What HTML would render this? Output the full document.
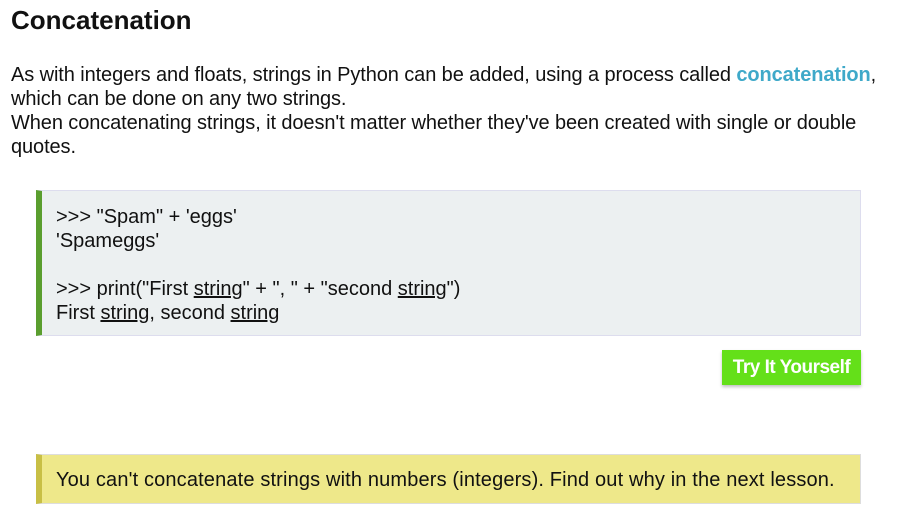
<!DOCTYPE html>
<html><head><style>
body{margin:0;background:#fff;font-family:"Liberation Sans",sans-serif;color:#111;width:905px;height:517px;overflow:hidden;position:relative}
h1{position:absolute;left:11px;top:5px;margin:0;font-size:26px;font-weight:bold;color:#111}
.p{position:absolute;left:11px;top:63px;font-size:20px;line-height:24px;width:894px;letter-spacing:-0.1px}
.p b{color:#3fa9c9}
.code{position:absolute;left:36px;top:190px;width:818px;height:144px;background:#ecf0f1;border:1px solid #dde;border-left:6px solid #5a9e2e;font-size:20px;line-height:24px}
.code div{position:absolute;left:14px;white-space:nowrap}
u{text-decoration:underline}
.btn{position:absolute;left:722px;top:350px;width:139px;height:35px;background:#64e019;color:#fff;font-weight:bold;font-size:19px;line-height:35px;text-align:center;box-shadow:0 2px 3px rgba(0,0,0,.25);letter-spacing:-0.5px}
.note{position:absolute;left:36px;top:454px;width:818px;height:48px;background:#eee88a;border:1px solid #ddd;border-left:6px solid #c8bf45;font-size:20px;line-height:50px}
.note span{position:absolute;left:14px;white-space:nowrap;letter-spacing:0.15px}
</style></head><body>
<h1>Concatenation</h1>
<div class="p">As with integers and floats, strings in Python can be added, using a process called <b>concatenation</b>,<br>which can be done on any two strings.<br>When concatenating strings, it doesn't matter whether they've been created with single or double<br>quotes.</div>
<div class="code">
<div style="top:14px">&gt;&gt;&gt; "Spam" + 'eggs'</div>
<div style="top:38px">'Spameggs'</div>
<div style="top:86px">&gt;&gt;&gt; print("First <u>string</u>" + ", " + "second <u>string</u>")</div>
<div style="top:110px">First <u>string</u>, second <u>string</u></div>
</div>
<div class="btn">Try It Yourself</div>
<div class="note"><span>You can't concatenate strings with numbers (integers). Find out why in the next lesson.</span></div>
</body></html>
